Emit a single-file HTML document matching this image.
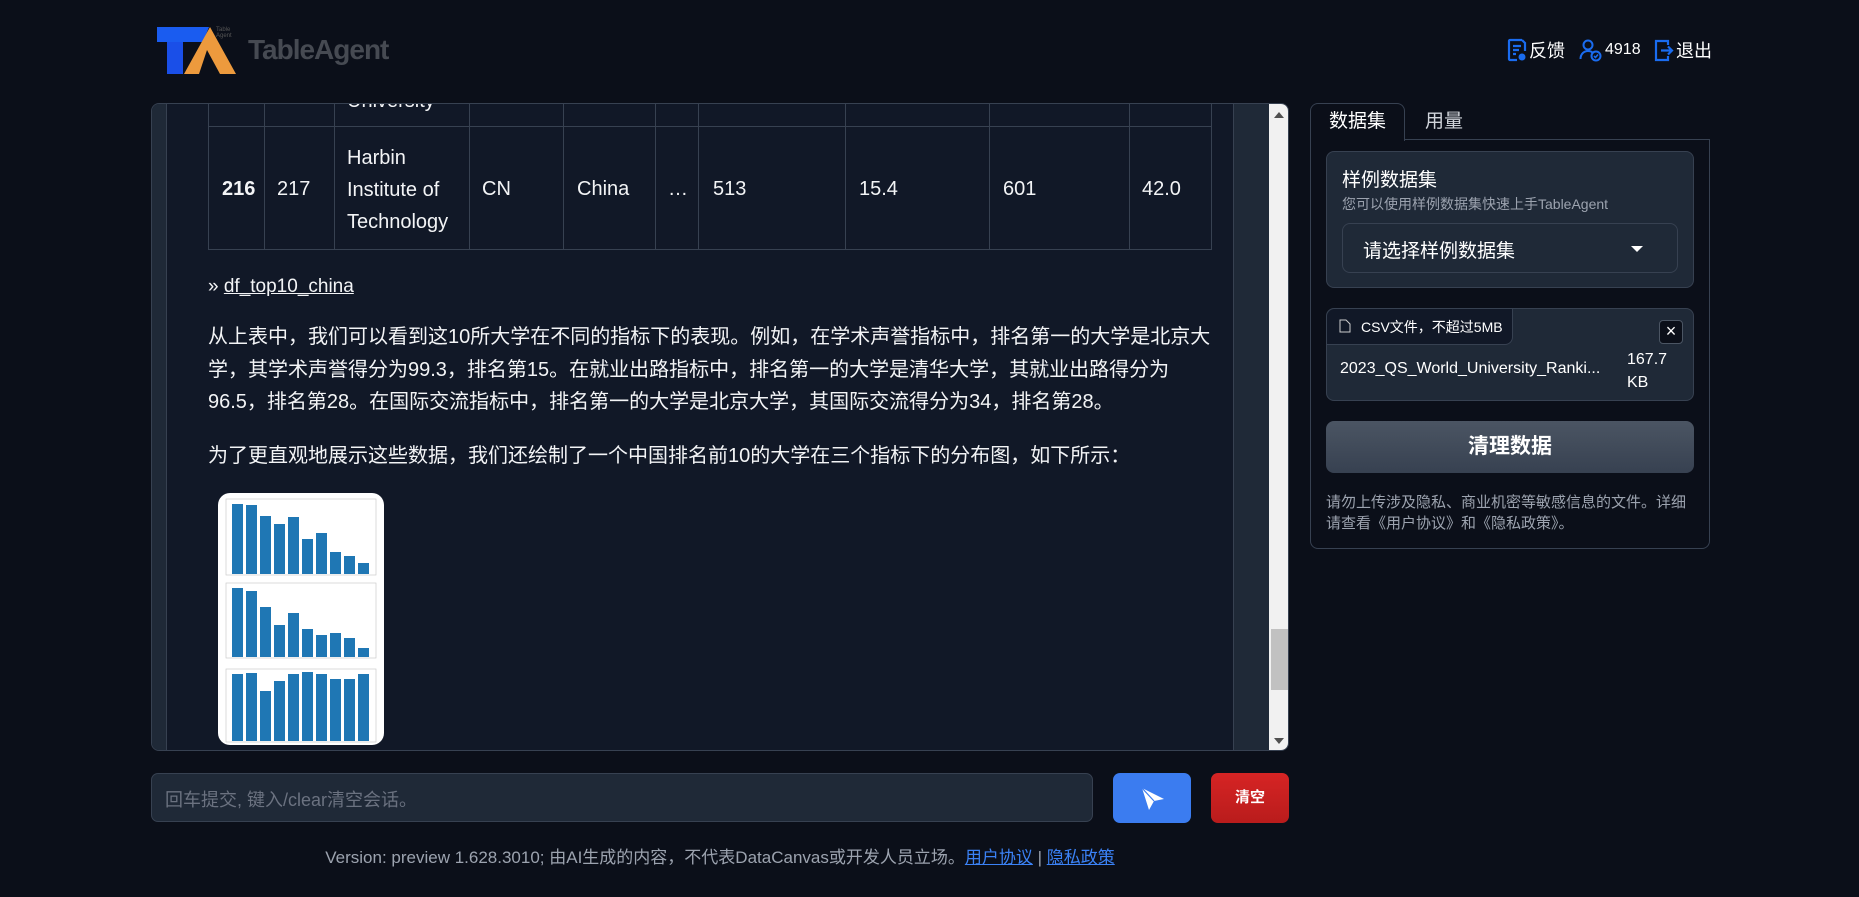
<!DOCTYPE html>
<html><head><meta charset="utf-8"><style>
*{box-sizing:border-box;margin:0;padding:0}
body{width:1859px;height:897px;background:#0b0f19;font-family:"Liberation Sans","Noto Sans CJK SC",sans-serif;color:#fff;position:relative;overflow:hidden}
.abs{position:absolute}
.hdr{font-size:18px;display:flex;align-items:center;gap:2px;top:36px;height:28px}
.chat{left:151px;top:103px;width:1138px;height:648px;background:#111827;border:1px solid #374151;border-radius:8px;overflow:hidden}
.c{position:absolute;font-size:20px;color:#f3f4f6}
.vl{position:absolute;width:1px;background:#374151}
.hl{position:absolute;height:1px;background:#374151}
p.t{position:absolute;left:56px;width:1012px;font-size:20px;line-height:32.6px;color:#f3f4f6}
</style></head><body>
<svg class="abs" style="left:155px;top:26px" width="82" height="50" viewBox="155 26 82 50">
<polygon points="157,27 209,27 203,42 157,42" fill="#1a5cf0"/>
<rect x="167" y="42" width="16" height="32" fill="#1a4fe8"/>
<polygon points="210,27 236,74 220,74 207,50 199,74 184,74" fill="#ed9a3d"/>
</svg>
<div class="abs" style="left:216px;top:27px;font-size:6px;color:#555;line-height:6px">Table<br>Agent</div>
<div class="abs" style="left:248px;top:34px;font-size:28px;color:#464a52;font-weight:bold;letter-spacing:-1px">TableAgent</div>

<div class="abs hdr" style="left:1507px"><svg width="20" height="24" viewBox="0 0 20 24"><path d="M15 2H3a1 1 0 0 0-1 1v18a1 1 0 0 0 1 1h7M15 2l3 3v8M6 8h8M6 12h6M6 16h3" stroke="#1a6cf0" stroke-width="2.2" fill="none"/><circle cx="15" cy="19" r="3.5" fill="#1a6cf0"/></svg><span>反馈</span></div>
<div class="abs hdr" style="left:1579px;font-size:16px"><svg width="24" height="24" viewBox="0 0 24 24"><circle cx="9" cy="7" r="4.5" stroke="#1a6cf0" stroke-width="2" fill="none"/><path d="M1.5 21c0-5 3.5-8 7.5-8 2 0 3.5.6 4.5 1.5" stroke="#1a6cf0" stroke-width="2" fill="none"/><circle cx="17" cy="18" r="4.5" stroke="#1a6cf0" stroke-width="2" fill="none"/><path d="M15 18l1.5 1.5 2.5-3" stroke="#1a6cf0" stroke-width="1.6" fill="none"/></svg><span>4918</span></div>
<div class="abs hdr" style="left:1654px"><svg width="20" height="24" viewBox="0 0 20 24"><path d="M14 7V3H2v19h12v-4" stroke="#1a6cf0" stroke-width="2.2" fill="none"/><path d="M7 12.5h11M14 8.5l4 4-4 4" stroke="#1a6cf0" stroke-width="2.2" fill="none"/></svg><span>退出</span></div>

<div class="abs chat">
 <div class="abs" style="left:0;top:0;width:15px;height:100%;background:#1f2937;border-right:1px solid #374151"></div>
 <div class="abs" style="left:1081px;top:0;width:36px;height:100%;background:#1f2937;border-left:1px solid #374151"></div>
 <div class="abs" style="left:1117px;top:0;width:21px;height:100%;background:#f1f1f1"></div>
 <div class="abs" style="left:1119px;top:525px;width:17px;height:61px;background:#c1c1c1"></div>
 <div class="abs" style="left:1122px;top:8px;width:0;height:0;border-left:5px solid transparent;border-right:5px solid transparent;border-bottom:6px solid #505050"></div>
 <div class="abs" style="left:1122px;top:634px;width:0;height:0;border-left:5px solid transparent;border-right:5px solid transparent;border-top:6px solid #505050"></div>
 <div class="hl" style="left:56px;top:22px;width:1004px"></div>
 <div class="hl" style="left:56px;top:145px;width:1004px"></div>
 <div class="vl" style="left:56px;top:0;height:146px"></div>
 <div class="vl" style="left:112px;top:0;height:146px"></div>
 <div class="vl" style="left:182px;top:0;height:146px"></div>
 <div class="vl" style="left:317px;top:0;height:146px"></div>
 <div class="vl" style="left:411px;top:0;height:146px"></div>
 <div class="vl" style="left:503px;top:0;height:146px"></div>
 <div class="vl" style="left:546px;top:0;height:146px"></div>
 <div class="vl" style="left:693px;top:0;height:146px"></div>
 <div class="vl" style="left:837px;top:0;height:146px"></div>
 <div class="vl" style="left:977px;top:0;height:146px"></div>
 <div class="vl" style="left:1059px;top:0;height:146px"></div>
 <div class="c" style="left:195px;top:-14px">University</div>
 <div class="c" style="left:70px;top:74px;font-weight:bold">216</div>
 <div class="c" style="left:125px;top:74px">217</div>
 <div class="c" style="left:195px;top:38px;line-height:32px">Harbin<br>Institute of<br>Technology</div>
 <div class="c" style="left:330px;top:74px">CN</div>
 <div class="c" style="left:425px;top:74px">China</div>
 <div class="c" style="left:516px;top:74px">…</div>
 <div class="c" style="left:561px;top:74px">513</div>
 <div class="c" style="left:707px;top:74px">15.4</div>
 <div class="c" style="left:851px;top:74px">601</div>
 <div class="c" style="left:990px;top:74px">42.0</div>
 <div class="c" style="left:56px;top:172px;font-size:19px">» <u>df_top10_china</u></div>
 <p class="t" style="top:217px">从上表中，我们可以看到这10所大学在不同的指标下的表现。例如，在学术声誉指标中，排名第一的大学是北京大学，其学术声誉得分为99.3，排名第15。在就业出路指标中，排名第一的大学是清华大学，其就业出路得分为96.5，排名第28。在国际交流指标中，排名第一的大学是北京大学，其国际交流得分为34，排名第28。</p>
 <p class="t" style="top:336px">为了更直观地展示这些数据，我们还绘制了一个中国排名前10的大学在三个指标下的分布图，如下所示：</p>
 <svg class="abs" style="left:66px;top:389px" width="166" height="252" viewBox="0 0 166 252">
  <rect width="166" height="252" rx="12" fill="#fff"/>
  <g fill="#1f77b4">
   <rect x="14" y="11" width="11" height="70"/><rect x="28" y="12" width="11" height="69"/><rect x="42" y="23" width="11" height="58"/><rect x="56" y="31" width="11" height="50"/><rect x="70" y="24" width="11" height="57"/><rect x="84" y="46" width="11" height="35"/><rect x="98" y="40" width="11" height="41"/><rect x="112" y="59" width="11" height="22"/><rect x="126" y="63" width="11" height="18"/><rect x="140" y="70" width="11" height="11"/>
   <rect x="14" y="95" width="11" height="69"/><rect x="28" y="98" width="11" height="66"/><rect x="42" y="114" width="11" height="50"/><rect x="56" y="132" width="11" height="32"/><rect x="70" y="120" width="11" height="44"/><rect x="84" y="136" width="11" height="28"/><rect x="98" y="142" width="11" height="22"/><rect x="112" y="140" width="11" height="24"/><rect x="126" y="145" width="11" height="19"/><rect x="140" y="155" width="11" height="9"/>
   <rect x="14" y="181" width="11" height="67"/><rect x="28" y="180" width="11" height="68"/><rect x="42" y="198" width="11" height="50"/><rect x="56" y="188" width="11" height="60"/><rect x="70" y="181" width="11" height="67"/><rect x="84" y="179" width="11" height="69"/><rect x="98" y="181" width="11" height="67"/><rect x="112" y="186" width="11" height="62"/><rect x="126" y="186" width="11" height="62"/><rect x="140" y="181" width="11" height="67"/>
  </g>
  <g fill="none" stroke="#ccc" stroke-width="0.7"><rect x="8" y="6" width="150" height="76"/><rect x="8" y="90" width="150" height="75"/><rect x="8" y="176" width="150" height="73"/></g>
 </svg>
</div>

<div class="abs" style="left:151px;top:773px;width:942px;height:49px;background:#1f2937;border:1px solid #374151;border-radius:7px;font-size:18px;color:#6b7280;padding:12px 13px">回车提交, 键入/clear清空会话。</div>
<div class="abs" style="left:1113px;top:773px;width:78px;height:50px;background:#3b7cf0;border-radius:7px"><svg style="position:absolute;left:27px;top:13px" width="26" height="26" viewBox="0 0 26 26"><path d="M2 2L24 13 14 15 9 24z" fill="#fff"/><path d="M2 2L14 15" stroke="#3b7cf0" stroke-width="1.2"/></svg></div>
<div class="abs" style="left:1211px;top:773px;width:78px;height:50px;background:linear-gradient(#d62424,#b91c1c);border-radius:7px;font-size:15px;font-weight:bold;text-align:center;line-height:50px">清空</div>
<div class="abs" style="left:0;width:1440px;top:843px;text-align:center;font-size:17px;color:#9ca3af">Version: preview 1.628.3010; 由AI生成的内容，不代表DataCanvas或开发人员立场。<u style="color:#3b82f6">用户协议</u> | <u style="color:#3b82f6">隐私政策</u></div>

<div class="abs" style="left:1310px;top:139px;width:400px;height:410px;border:1px solid #374151;border-radius:0 0 8px 8px"></div>
<div class="abs" style="left:1310px;top:103px;width:95px;height:38px;background:#0b0f19;border:1px solid #374151;border-bottom:none;border-radius:8px 8px 0 0;font-size:19px;text-align:center;line-height:36px">数据集</div>
<div class="abs" style="left:1425px;top:106px;font-size:19px;color:#d1d5db">用量</div>
<div class="abs" style="left:1326px;top:151px;width:368px;height:137px;background:#1f2937;border:1px solid #374151;border-radius:8px">
 <div class="abs" style="left:15px;top:13px;font-size:19px">样例数据集</div>
 <div class="abs" style="left:15px;top:42px;font-size:14px;color:#9ca3af">您可以使用样例数据集快速上手TableAgent</div>
 <div class="abs" style="left:15px;top:71px;width:336px;height:50px;border:1px solid #374151;border-radius:8px;font-size:19px;padding:12px 20px">请选择样例数据集<span style="position:absolute;right:34px;top:22px;border-left:6px solid transparent;border-right:6px solid transparent;border-top:6px solid #fff"></span></div>
</div>
<div class="abs" style="left:1326px;top:308px;width:368px;height:93px;background:#1f2937;border:1px solid #374151;border-radius:8px">
 <div class="abs" style="left:0;top:0;width:186px;height:36px;background:#111827;border-right:1px solid #374151;border-bottom:1px solid #374151;border-radius:8px 0 8px 0;font-size:14px;padding:8px 0 0 34px">CSV文件，不超过5MB<svg style="position:absolute;left:12px;top:10px" width="12" height="14" viewBox="0 0 12 14"><path d="M1 1h6l4 4v8H1z" stroke="#ccc" fill="none"/></svg></div>
 <div class="abs" style="left:332px;top:11px;width:24px;height:24px;background:#0b0f19;border:1px solid #4b5563;border-radius:4px;text-align:center;line-height:21px;font-size:18px">×</div>
 <div class="abs" style="left:13px;top:51px;font-size:16px">2023_QS_World_University_Ranki...</div>
 <div class="abs" style="left:300px;top:39px;font-size:16px;line-height:23px">167.7<br>KB</div>
</div>
<div class="abs" style="left:1326px;top:421px;width:368px;height:52px;background:linear-gradient(#4b5563,#374151);border-radius:8px;font-size:21px;font-weight:bold;text-align:center;line-height:52px">清理数据</div>
<div class="abs" style="left:1326px;top:492px;width:370px;font-size:15px;line-height:21px;color:#9ca3af">请勿上传涉及隐私、商业机密等敏感信息的文件。详细请查看《用户协议》和《隐私政策》。</div>
</body></html>
